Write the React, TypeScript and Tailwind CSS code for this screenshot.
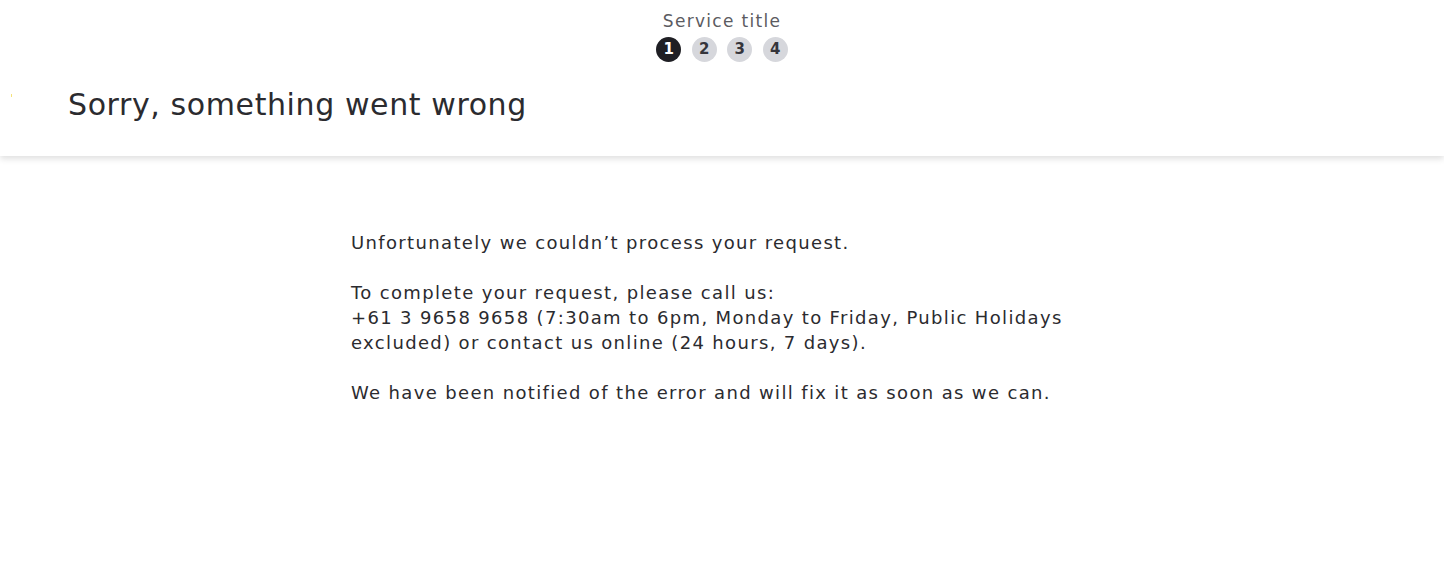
const steps = [1, 2, 3, 4];

export default function App() {
  return (
    <div className="min-h-[573px] bg-white text-[#2b2b2f] font-['DejaVu_Sans',sans-serif]">
      {/* HEADER */}
      <header className="relative h-[156px] bg-white shadow-[0_3px_6px_rgba(0,0,0,0.12)]">
        <span className="absolute left-[11px] top-[94px] h-[3px] w-[1px] bg-[#f5e27a]" />
        <div className="flex flex-col items-center pt-[9px]">
          <div className="text-[17px] leading-[24px] tracking-[1.3px] text-[#5b5b61]">Service title</div>
          <ol className="mt-[4px] flex gap-[10.5px]">
            {steps.map((n) => (
              <li
                key={n}
                className={
                  n === 1
                    ? "flex h-[25px] w-[25px] items-center justify-center rounded-full bg-[#1f1f24] text-[15px] font-bold text-white"
                    : "flex h-[25px] w-[25px] items-center justify-center rounded-full bg-[#d6d7dc] text-[15px] font-bold text-[#35353b]"
                }
              >
                {n}
              </li>
            ))}
          </ol>
        </div>
        <h1 className="mt-[23px] pl-[68px] text-[30px] leading-[40px] tracking-[0.6px] font-normal text-[#2b2b2f]">
          Sorry, something went wrong
        </h1>
      </header>

      {/* BODY */}
      <main className="mx-auto w-[742px] pt-[74px] text-[18px] leading-[25px] tracking-[1.35px] text-[#2b2b2f]">
        <p>Unfortunately we couldn’t process your request.</p>
        <p className="mt-[25px]">
          To complete your request, please call us:
          <br />
          +61 3 9658 9658 (7:30am to 6pm, Monday to Friday, Public Holidays excluded) or contact us online (24 hours, 7 days).
        </p>
        <p className="mt-[25px]">We have been notified of the error and will fix it as soon as we can.</p>
      </main>
    </div>
  );
}
